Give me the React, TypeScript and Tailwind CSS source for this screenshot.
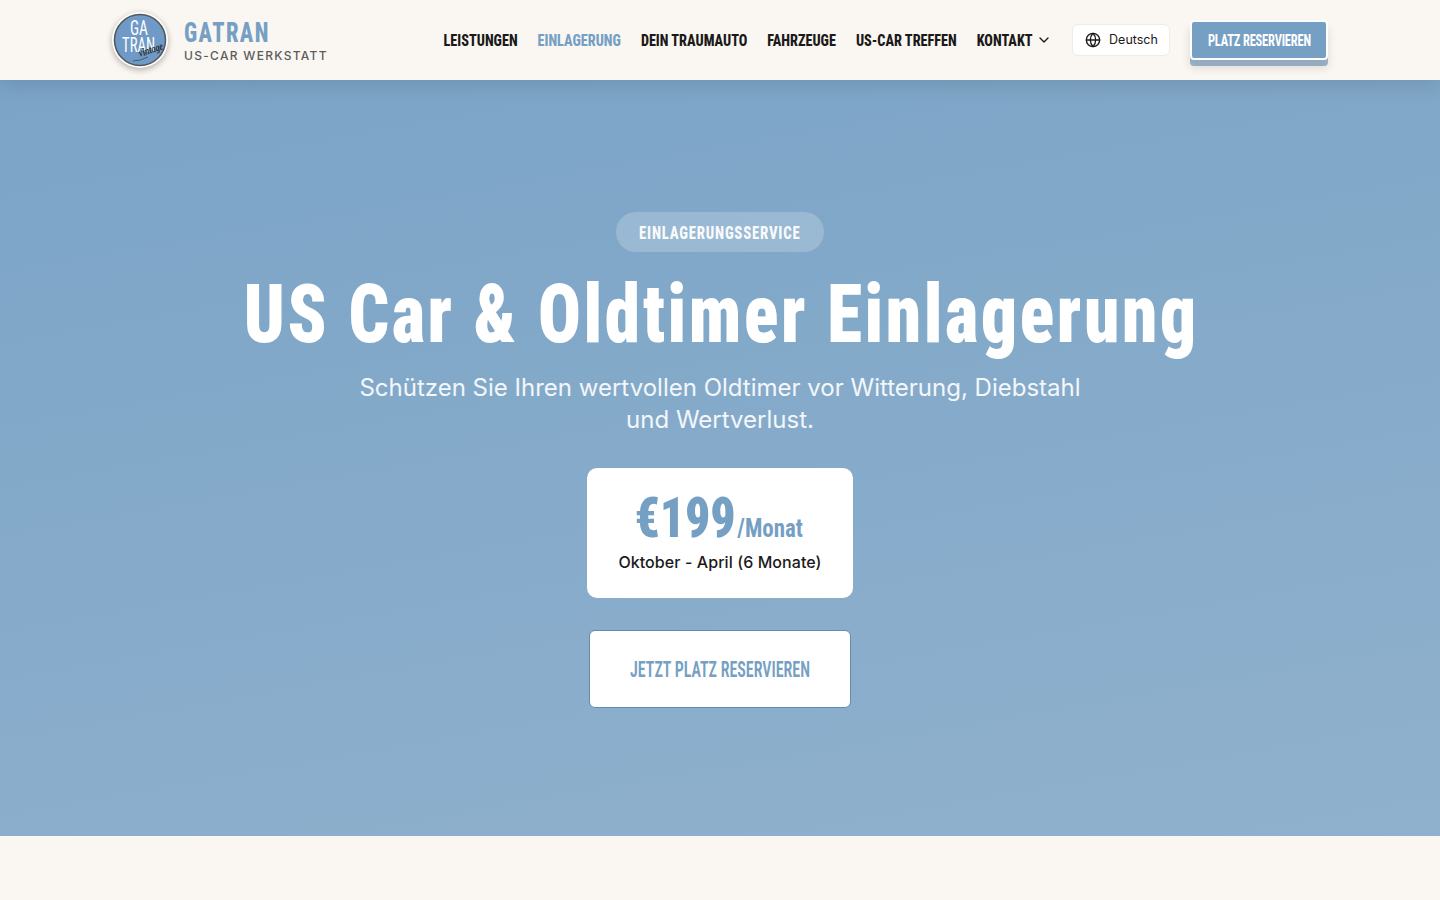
import { ChevronDown, Globe } from 'lucide-react'

const cond = "font-['Roboto',sans-serif] [font-stretch:75%]"
const links = ['LEISTUNGEN', 'EINLAGERUNG', 'DEIN TRAUMAUTO', 'FAHRZEUGE', 'US-CAR TREFFEN', 'KONTAKT']

function Logo() {
  return (
    <div className="h-[56px] w-[56px] shrink-0 rounded-full bg-white shadow-[0_2px_6px_rgba(0,0,0,0.3)]">
      <svg viewBox="0 0 56 56" className="h-full w-full overflow-visible">
        <circle cx="28" cy="28" r="25.5" fill="#6f9ac7" stroke="#55585c" strokeWidth="1.6" />
        <text x="18" y="23" fontSize="20" textLength="18" lengthAdjust="spacingAndGlyphs" fill="#fff" className={cond}>GA</text>
        <text x="10" y="40" fontSize="20" textLength="33" lengthAdjust="spacingAndGlyphs" fill="#fff" className={cond}>TRAN</text>
        <text x="40" y="41" textAnchor="middle" fontSize="11" fontStyle="italic" fontWeight="700" textLength="25" lengthAdjust="spacingAndGlyphs" fill="#2a2a2a" fontFamily="Liberation Serif, serif" transform="rotate(-18 40 41)">vintage</text>
        <path d="M21 49 Q28 49 36 45" fill="none" stroke="#3a3f45" strokeWidth="0.7" />
      </svg>
    </div>
  )
}

export default function App() {
  return (
    <div className="min-h-[900px] bg-[#faf7f2] font-['Inter',sans-serif]">
      <header className="relative z-10 h-[80px] bg-[#faf7f2] shadow-[0_4px_20px_rgba(0,0,0,0.12)]">
        <div className="mx-auto flex h-full max-w-[1232px] items-center justify-between px-[8px]">
          <div className="flex items-center gap-[16px]">
            <Logo />
            <div className="flex flex-col items-start pt-[3px]">
              <span className={`${cond} origin-left scale-x-[0.83] text-[27px] font-extrabold leading-[29px] tracking-[1.7px] text-[#75a0c4]`}>GATRAN</span>
              <span className="whitespace-nowrap text-[12px] font-medium leading-[16px] tracking-[1.3px] text-[#5c5c5c]">US-CAR WERKSTATT</span>
            </div>
          </div>
          <nav className="flex items-center whitespace-nowrap">
            {/* condensed as one block so the gaps stay even */}
            <div className={`${cond} mt-[2px] flex origin-right scale-x-[0.836] items-center gap-[23.9px] text-[17px] font-extrabold text-[#1a1a1a]`}>
              {links.map((l) => (
                <a key={l} className={l === 'EINLAGERUNG' ? 'text-[#75a0c4]' : ''}>{l}</a>
              ))}
            </div>
            <ChevronDown size={16} className="ml-[4px] text-[#1a1a1a]" />
            <button className="ml-[20px] flex h-[32px] w-[98px] items-center justify-center gap-[8px] rounded-[6px] border border-[#ececec] bg-white text-[12.5px] text-[#1a1a1a]">
              <Globe size={16} /> Deutsch
            </button>
            <button className="ml-[20px] flex h-[40px] w-[138px] items-center justify-center rounded-[4px] border-2 border-white bg-[#75a0c4] pt-[1px] text-white shadow-[0_6px_0_rgba(117,150,180,0.7),0_8px_10px_rgba(0,0,0,0.12)]">
              <span className={`${cond} scale-x-[0.775] whitespace-nowrap text-[16px] font-bold tracking-[-0.2px]`}>PLATZ RESERVIEREN</span>
            </button>
          </nav>
        </div>
      </header>
      <section className="flex h-[756px] flex-col items-center bg-[linear-gradient(170deg,#7ba4c7,#90b1cd)] pt-[132px]">
        <span className="flex h-[40px] w-[208px] items-center justify-center rounded-full bg-white/20 text-white/95">
          <span className={`${cond} scale-x-[0.825] whitespace-nowrap text-[18px] font-extrabold tracking-[0.9px]`}>EINLAGERUNGSSERVICE</span>
        </span>
        <h1 className={`${cond} ml-[3px] mt-[15px] scale-x-[0.879] whitespace-nowrap text-[81px] font-black leading-[96px] tracking-[3px] text-white`}>US Car &amp; Oldtimer Einlagerung</h1>
        <p className="mt-[9px] w-[768px] text-center text-[24px] leading-[32px] text-white/90">Schützen Sie Ihren wertvollen Oldtimer vor Witterung, Diebstahl und Wertverlust.</p>
        <div className="mt-[32px] flex h-[130px] w-[266px] flex-col items-center rounded-[10px] bg-white pt-[20px]">
          <div className={`${cond} flex scale-x-[0.883] items-baseline pr-[4px] font-black text-[#75a0c4]`}>
            <span className="text-[56px] leading-[60px]">€199</span>
            <span className="ml-[2px] text-[26px] font-bold">/Monat</span>
          </div>
          <span className="mt-[2px] text-[16px] font-medium leading-[24px] tracking-[0.08px] text-[#1a1a1a]">Oktober - April (6 Monate)</span>
        </div>
        <button className="mt-[32px] flex h-[78px] w-[262px] items-center justify-center rounded-[6px] border border-[#5f8cb0] bg-white text-[#75a0c4]">
          <span className={`${cond} scale-x-[0.726] whitespace-nowrap text-[22px] font-semibold`}>JETZT PLATZ RESERVIEREN</span>
        </button>
      </section>
    </div>
  )
}
